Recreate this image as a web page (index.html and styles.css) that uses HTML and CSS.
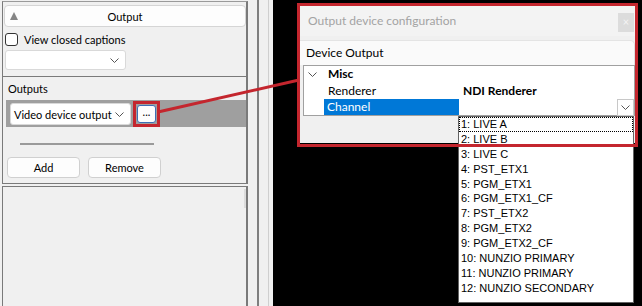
FILE: index.html
```html
<!DOCTYPE html>
<html lang="en">
<head>
  <meta charset="UTF-8"/>
  <title>Output device configuration</title>
  <link rel="stylesheet" href="styles.css">
</head>
<body>
  <div class="screen">
    <aside class="side">
      <section class="pane top">
        <button class="expander"><span class="tri"></span><span class="label">Output</span></button>
        <label class="check"><span class="box"></span>View closed captions</label>
        <div class="combo short">
          <span></span>
          <svg class="chev" width="9" height="5" viewBox="0 0 9 5"><polyline points="0.5,0.5 4.5,4.5 8.5,0.5"/></svg>
        </div>
      </section>
      <section class="pane outputs">
        <div class="caption">Outputs</div>
        <div class="band">
          <div class="combo device">
            <span>Video device output</span>
            <svg class="chev" width="9" height="5" viewBox="0 0 9 5"><polyline points="0.5,0.5 4.5,4.5 8.5,0.5"/></svg>
          </div>
          <span class="mark"><button class="dots">...</button></span>
        </div>
        <div class="rule"></div>
        <div class="actions">
          <button class="btn">Add</button>
          <button class="btn">Remove</button>
        </div>
      </section>
      <section class="pane rest"><span class="thumb"></span></section>
    </aside>
    <div class="splitter"><i class="dark"></i><i class="light"></i></div>
    <div class="viewport"></div>
  </div>

  <div class="dialog">
    <div class="titlebar">
      <span>Output device configuration</span>
      <span class="close">&times;</span>
    </div>
    <div class="tabhead">Device Output</div>
    <div class="grid">
      <div class="row cat">
        <span class="gutter">
          <svg width="9" height="6" viewBox="0 0 9 6"><polyline points="0.5,0.5 4.5,4.5 8.5,0.5"/></svg>
        </span>
        <span class="name">Misc</span>
      </div>
      <div class="row">
        <span class="gutter"></span>
        <span class="name">Renderer</span>
        <span class="value strong">NDI Renderer</span>
      </div>
      <div class="row">
        <span class="gutter"></span>
        <span class="name selected">Channel</span>
        <span class="value">
          <span class="drop">
            <svg width="9" height="5" viewBox="0 0 9 5"><polyline points="0.5,0.5 4.5,4.5 8.5,0.5"/></svg>
          </span>
        </span>
      </div>
    </div>
  </div>

  <ul class="droplist">
    <li class="focus">1: LIVE A</li>
    <li>2: LIVE B</li>
    <li>3: LIVE C</li>
    <li>4: PST_ETX1</li>
    <li>5: PGM_ETX1</li>
    <li>6: PGM_ETX1_CF</li>
    <li>7: PST_ETX2</li>
    <li>8: PGM_ETX2</li>
    <li>9: PGM_ETX2_CF</li>
    <li>10: NUNZIO PRIMARY</li>
    <li>11: NUNZIO PRIMARY</li>
    <li>12: NUNZIO SECONDARY</li>
  </ul>

  <div class="callout"></div>
  <svg class="leader" width="642" height="306" viewBox="0 0 642 306">
    <line x1="158" y1="112" x2="299" y2="80"/>
  </svg>
</body>
</html>
```

FILE: styles.css
```css
:root {
  --ui: "Segoe UI", Lato, "Liberation Sans", sans-serif;
  --face: #f0f0f0;
  --edge: #7a7a7a;
  --red: #c4262e;
}
* { box-sizing: border-box; }
body { margin: 0; width: 642px; height: 306px; overflow: hidden; position: relative;
  font-family: var(--ui); font-size: 12px; color: #000; background: #000;
}
button { font: inherit; color: inherit; }

.screen { display: flex; height: 306px; }

/* left tool panel */
.side { width: 248px; padding-left: 2px; background: var(--face); display: flex; flex-direction: column; font-size: 11px; }
.pane { border-left: 1px solid var(--edge); border-right: 2px solid var(--edge); }
.top { border-top: 1px solid #9a9a9a; margin-top: 1px; padding: 3px 0 6px; }
.expander {
  display: flex; align-items: center; width: 242px; height: 22px; margin-left: 1px;
  padding: 0 13px 0 5px; background: #fdfdfd; border: 1px solid #d5d5d5; border-radius: 4px;
}
.tri { width: 0; height: 0; border-style: solid; border-width: 0 4.5px 8px; border-color: transparent transparent #858585; }
.expander .label { flex: 1; text-align: center; }
.check { display: flex; align-items: center; height: 13px; margin: 6px 0 0 2px; gap: 6px; }
.box { width: 13px; height: 13px; border: 1px solid #333; border-radius: 3px; background: #fff; }
.combo {
  display: flex; align-items: center; justify-content: space-between; white-space: nowrap;
  background: #fff; border: 1px solid #d9d9d9; border-radius: 3px; padding: 0 6px 0 3px;
}
.combo.short { width: 121px; height: 20px; margin: 4px 0 0 2px; }
.chev polyline, .grid svg polyline, .drop polyline { fill: none; stroke: #555; stroke-width: 1; }

.outputs { border-top: 1px solid var(--edge); border-bottom: 1px solid var(--edge); padding: 4px 0 5px; }
.caption { line-height: 16px; padding-left: 5px; }
.band { display: flex; align-items: flex-start; height: 27px; margin: 3px 0 0 3px; padding-left: 4px; background: #9f9f9f; }
.combo.device { width: 121px; height: 22px; margin-top: 3px; }
.mark { display: flex; align-items: center; justify-content: center; width: 27px; height: 26px; margin: 1px 0 0 2px; border: 3px solid var(--red); }
.dots {
  width: 19px; height: 18px; padding: 0 0 4px; line-height: 12px; background: #fdfdfd;
  border: 1px solid #3d6fb5; border-radius: 3px;
}
.rule { width: 134px; height: 2px; margin: 16px 0 0 17px; background: #9a9a9a; }
.actions { display: flex; gap: 8px; margin: 12px 0 0 4px; }
.btn { width: 73px; height: 21px; padding: 0; background: #fdfdfd; border: 1px solid #d0d0d0; border-radius: 4px; }

.rest { flex: 1; margin-top: 2px; border-top: 1px solid var(--edge); position: relative; }
.thumb { position: absolute; right: 0; top: 2px; width: 2px; height: 19px; background: #dcdcdc; }

.splitter { width: 25px; background: var(--face); display: flex; }
.splitter .dark { width: 2px; margin-left: 9px; background: #7f7f7f; }
.splitter .light { width: 1px; margin-left: 9px; background: #cfcfcf; }
.viewport { flex: 1; background: #000; }

/* configuration dialog */
.dialog { position: absolute; left: 300px; top: 6px; width: 335px; height: 137px; background: var(--face); }
.titlebar { position: relative; height: 30px; padding-left: 8px; line-height: 30px; font-size: 12px; color: #a3a3a3; background: #f3f3f3; }
.close {
  position: absolute; right: 1px; top: 7px; width: 16px; height: 19px;
  line-height: 18px; text-align: center; font-size: 11px; color: #f4f4f4; background: #dcdcdc;
}
.tabhead {
  height: 25px; margin-top: 4px; padding-left: 6px; line-height: 24px;
  background: #fafafa; border-top: 1px solid #e4e4e4; border-right: 1px solid #dedede; border-top-right-radius: 5px;
}
.grid { width: 332px; margin-left: 3px; border: 1px solid #a0a0a0; background: #fff; }
.row { display: flex; height: 16px; line-height: 16px; }
.row.cat { height: 17px; }
.gutter { width: 20px; display: flex; align-items: center; justify-content: center; padding-right: 4px; }
.name { width: 135px; padding-left: 4px; }
.cat .name { font-weight: 700; }
.name.selected { background: #0078d7; color: #fff; padding-left: 3px; }
.value { flex: 1; padding-left: 4px; position: relative; }
.value.strong { font-weight: 700; }
.drop {
  position: absolute; right: 0; top: 0; width: 17px; height: 17px;
  display: flex; align-items: center; justify-content: center; border: 1px solid #c8c8c8; background: #fff;
}

.droplist {
  position: absolute; left: 458px; top: 116px; width: 176px; height: 187px;
  margin: 0; padding: 0; list-style: none; background: #fff; border: 1px solid #646464;
  font-family: "Liberation Sans", Arial, sans-serif; font-size: 11px;
}
.droplist li { height: 14.9px; line-height: 15px; padding-left: 2px; }
.droplist li.focus { outline: 1px dotted #000; outline-offset: -1px; }

/* annotation */
.callout { position: absolute; left: 297px; top: 3px; width: 341px; height: 144px; border: 3px solid var(--red); }
.leader { position: absolute; left: 0; top: 0; pointer-events: none; }
.leader line { stroke: var(--red); stroke-width: 3; }
```
